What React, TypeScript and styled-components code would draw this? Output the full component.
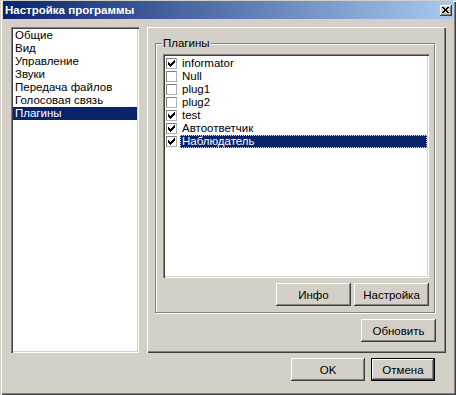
import React from "react";
import styled, { createGlobalStyle } from "styled-components";

const Global = createGlobalStyle`
  html, body { margin: 0; padding: 0; background: #D4D0C8; }
  body { font-family: "Liberation Sans", Arial, sans-serif; font-size: 11.5px; color: #000; }
  * { box-sizing: border-box; }
`;

const Window = styled.div`
  width: 456px;
  height: 395px;
  background: #D4D0C8;
  display: flex;
  flex-direction: column;
  padding: 1px 3px 4px 3px;
  box-shadow: inset 1px 1px 0 #D4D0C8, inset 2px 2px 0 #ffffff,
    inset -1px -1px 0 #404040, inset -2px -2px 0 #808080;
`;

const TitleBar = styled.div`
  height: 18px;
  flex: none;
  display: flex;
  align-items: center;
  justify-content: space-between;
  padding: 0 1px 0 2px;
  background: linear-gradient(to right, #0a246a, #a6caf0);
  color: #fff;
  font-weight: bold;
  font-size: 11.5px;
`;

const CloseButton = styled.div`
  width: 12px;
  height: 11px;
  background: #d4d0c8;
  display: flex;
  align-items: center;
  justify-content: center;
  box-shadow: inset -1px -1px 0 #404040, inset 1px 1px 0 #ffffff,
    inset -2px -2px 0 #808080;
  padding-bottom: 1px;
  padding-right: 1px;
`;

const Body = styled.div`
  flex: 1;
  display: flex;
  flex-direction: column;
  padding: 8px 7px 0 8px;
`;

const Main = styled.div`
  height: 326px;
  display: flex;
  gap: 8px;
`;

const Sunken = styled.div`
  background: #fff;
  box-shadow: inset 1px 1px 0 #808080, inset 2px 2px 0 #404040,
    inset -1px -1px 0 #ffffff, inset -2px -2px 0 #d4d0c8;
  padding: 2px;
`;

const CategoryList = styled(Sunken)`
  width: 128px;
  display: flex;
  flex-direction: column;
`;

const CategoryItem = styled.div<{ $selected?: boolean }>`
  height: 13px;
  line-height: 13px;
  padding-left: 2px;
  white-space: nowrap;
  background: ${(p) => (p.$selected ? "#0a246a" : "transparent")};
  color: ${(p) => (p.$selected ? "#fff" : "#000")};
`;

const Panel = styled.div`
  width: 299px;
  display: flex;
  flex-direction: column;
  align-items: flex-start;
  padding: 10px 11px 0 8px;
  box-shadow: inset 1px 1px 0 #ffffff, inset -1px -1px 0 #404040,
    inset -2px -2px 0 #808080;
`;

const Group = styled.fieldset`
  margin: 0;
  width: 280px;
  min-width: 0;
  padding: 0 5px 6px 6px;
  border: 1px solid #808080;
  box-shadow: 1px 1px 0 #ffffff, inset 1px 1px 0 #ffffff;
  display: flex;
  flex-direction: column;
`;

const Legend = styled.legend`
  padding: 0 1px;
  height: 13px;
  line-height: 13px;
  background: #d4d0c8;
`;

const PluginList = styled(Sunken)`
  margin: 4px 0 0 1px;
  height: 224px;
  padding-top: 3px;
  display: flex;
  flex-direction: column;
`;

const PluginRow = styled.div`
  height: 13px;
  display: flex;
  align-items: center;
  padding-left: 1px;
`;

const CheckBox = styled.div`
  width: 11px;
  height: 11px;
  flex: none;
  background: #fff;
  border: 1px solid #808080;
  border-right-color: #b0b0b0;
  border-bottom-color: #b0b0b0;
  display: flex;
  align-items: center;
  justify-content: center;
`;

const PluginLabel = styled.div<{ $selected?: boolean }>`
  flex: 1;
  margin-left: 3px;
  height: 13px;
  line-height: 13px;
  padding-left: 2px;
  white-space: nowrap;
  background: ${(p) => (p.$selected ? "#0a246a" : "transparent")};
  color: ${(p) => (p.$selected ? "#fff" : "#000")};
  outline: ${(p) => (p.$selected ? "1px dotted #f5db95" : "none")};
  outline-offset: -1px;
`;

const ButtonRow = styled.div`
  display: flex;
  justify-content: flex-end;
  gap: 3px;
  margin-top: 5px;
`;

const Button = styled.div<{ $w?: number; $default?: boolean }>`
  width: ${(p) => p.$w ?? 75}px;
  height: 23px;
  flex: none;
  display: flex;
  align-items: center;
  justify-content: center;
  background: #d4d0c8;
  font: 400 11.5px "Liberation Sans", Arial, sans-serif;
  color: #000;
  cursor: default;
  user-select: none;
  box-shadow: ${(p) =>
    p.$default
      ? "inset 0 0 0 1px #000000, inset -2px -2px 0 #404040, inset 2px 2px 0 #ffffff, inset -3px -3px 0 #808080"
      : "inset -1px -1px 0 #404040, inset 1px 1px 0 #ffffff, inset -2px -2px 0 #808080, inset 2px 2px 0 #d4d0c8"};
`;

const RefreshButton = styled(Button)`
  margin-top: 6px;
  align-self: flex-end;
  margin-right: -1px;
`;

const Footer = styled.div`
  display: flex;
  justify-content: flex-end;
  gap: 6px;
  margin-top: 5px;
  padding-right: 11px;
`;

const pixelRects = (rows: string[], color: string) =>
  rows.flatMap((r, y) =>
    r.split("").map((c, x) =>
      c === "X" ? <rect key={`${x}-${y}`} x={x} y={y} width={1} height={1} fill={color} /> : null
    )
  );

const CloseGlyph = () => (
  <svg width="7" height="6" viewBox="0 0 7 6" shapeRendering="crispEdges">
    {pixelRects(["XX...XX", ".XX.XX.", "..XXX..", "..XXX..", ".XX.XX.", "XX...XX"], "#000")}
  </svg>
);

const CheckGlyph = () => (
  <svg width="7" height="7" viewBox="0 0 7 7" shapeRendering="crispEdges">
    {pixelRects(
      ["......X", ".....XX", "X...XXX", "XX.XXX.", "XXXXX..", ".XXX...", "..X...."],
      "#000"
    )}
  </svg>
);

const categories = [
  "Общие",
  "Вид",
  "Управление",
  "Звуки",
  "Передача файлов",
  "Голосовая связь",
  "Плагины",
];

const plugins = [
  { name: "informator", on: true },
  { name: "Null", on: false },
  { name: "plug1", on: false },
  { name: "plug2", on: false },
  { name: "test", on: true },
  { name: "Автоответчик", on: true },
  { name: "Наблюдатель", on: true },
];

export default function App() {
  return (
    <>
      <Global />
      <Window>
        <TitleBar>
          <span>Настройка программы</span>
          <CloseButton>
            <CloseGlyph />
          </CloseButton>
        </TitleBar>
        <Body>
          <Main>
            <CategoryList>
              {categories.map((c, i) => (
                <CategoryItem key={c} $selected={i === categories.length - 1}>
                  {c}
                </CategoryItem>
              ))}
            </CategoryList>
            <Panel>
              <Group>
                <Legend>Плагины</Legend>
                <PluginList>
                  {plugins.map((p, i) => (
                    <PluginRow key={p.name}>
                      <CheckBox>{p.on && <CheckGlyph />}</CheckBox>
                      <PluginLabel $selected={i === plugins.length - 1}>{p.name}</PluginLabel>
                    </PluginRow>
                  ))}
                </PluginList>
                <ButtonRow>
                  <Button role="button">Инфо</Button>
                  <Button role="button">Настройка</Button>
                </ButtonRow>
              </Group>
              <RefreshButton role="button">Обновить</RefreshButton>
            </Panel>
          </Main>
          <Footer>
            <Button role="button" $w={74}>
              OK
            </Button>
            <Button role="button" $w={64} $default>
              Отмена
            </Button>
          </Footer>
        </Body>
      </Window>
    </>
  );
}
